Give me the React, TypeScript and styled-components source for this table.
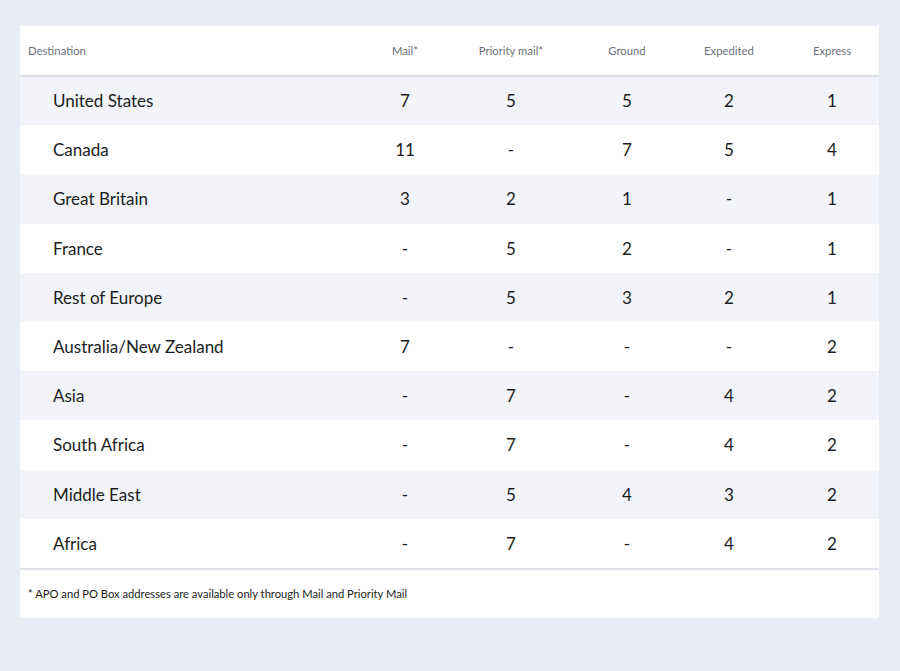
import React from "react";
import styled, { createGlobalStyle } from "styled-components";

const Global = createGlobalStyle`
  html, body { margin: 0; padding: 0; background: #e8ecf5; }
  body { font-family: Lato, "Noto Sans", sans-serif; }
`;

const Page = styled.div`
  padding: 26px 21px 53px 20px;
`;

const Card = styled.div`
  background: #ffffff;
`;

const cols = "350px 70px 142px 90px 114px 92px 1fr";

const HeaderRow = styled.div`
  display: grid;
  grid-template-columns: ${cols};
  height: 49px;
  align-items: center;
  border-bottom: 1px solid #d9dce6;
  box-shadow: 0 1px 1px rgba(200, 205, 220, 0.4);
  position: relative;
`;

const HeadCell = styled.div<{ $left?: boolean }>`
  font-size: 11.3px;
  color: #6c707a;
  white-space: nowrap;
  text-align: ${(p) => (p.$left ? "left" : "center")};
  padding-left: ${(p) => (p.$left ? "8px" : "0")};
`;

const Row = styled.div<{ $shade: boolean }>`
  display: grid;
  grid-template-columns: ${cols};
  height: 49.2px;
  align-items: center;
  background: ${(p) => (p.$shade ? "#f2f4f9" : "#ffffff")};
`;

const Cell = styled.div<{ $left?: boolean }>`
  font-size: 17px;
  color: #1b1d22;
  white-space: nowrap;
  text-align: ${(p) => (p.$left ? "left" : "center")};
  padding-left: ${(p) => (p.$left ? "33px" : "0")};
`;

const Footer = styled.div`
  border-top: 2px solid #e1e4ea;
  height: 48px;
  display: flex;
  align-items: center;
  padding-left: 8px;
  font-size: 11.2px;
  color: #1b1d22;
`;

const headers = ["Mail*", "Priority mail*", "Ground", "Expedited", "Express"];

const rows: [string, string, string, string, string, string][] = [
  ["United States", "7", "5", "5", "2", "1"],
  ["Canada", "11", "-", "7", "5", "4"],
  ["Great Britain", "3", "2", "1", "-", "1"],
  ["France", "-", "5", "2", "-", "1"],
  ["Rest of Europe", "-", "5", "3", "2", "1"],
  ["Australia/New Zealand", "7", "-", "-", "-", "2"],
  ["Asia", "-", "7", "-", "4", "2"],
  ["South Africa", "-", "7", "-", "4", "2"],
  ["Middle East", "-", "5", "4", "3", "2"],
  ["Africa", "-", "7", "-", "4", "2"],
];

export default function App() {
  return (
    <>
      <Global />
      <Page>
        <Card>
          <HeaderRow>
            <HeadCell $left>Destination</HeadCell>
            {headers.map((h) => (
              <HeadCell key={h}>{h}</HeadCell>
            ))}
          </HeaderRow>
          {rows.map((r, i) => (
            <Row key={r[0]} $shade={i % 2 === 0}>
              <Cell $left>{r[0]}</Cell>
              {r.slice(1).map((v, j) => (
                <Cell key={j}>{v}</Cell>
              ))}
            </Row>
          ))}
          <Footer>* APO and PO Box addresses are available only through Mail and Priority Mail</Footer>
        </Card>
      </Page>
    </>
  );
}
